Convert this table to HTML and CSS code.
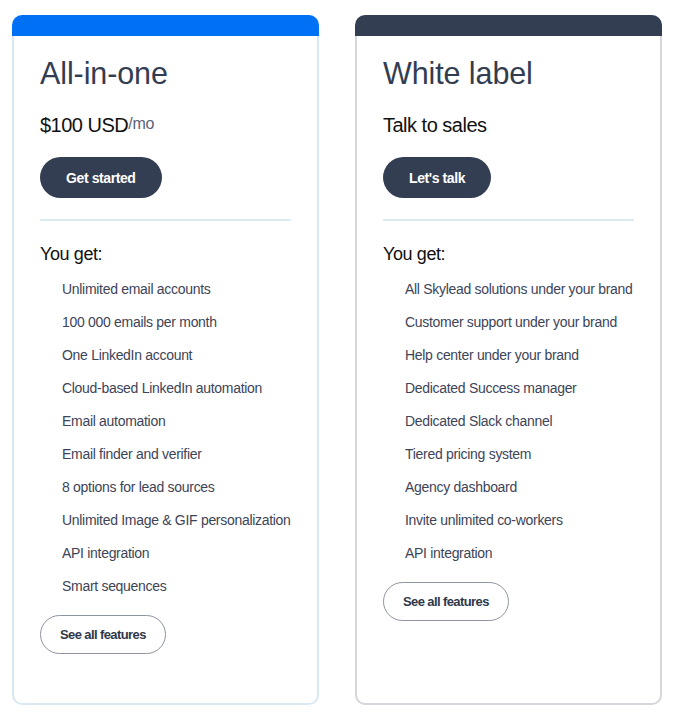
FILE: index.html
```html
<!DOCTYPE html>
<html lang="en">
<head>
<meta charset="utf-8">
<title>Pricing</title>
<link rel="stylesheet" href="styles.css">
</head>
<body>
<div class="plans">
  <div class="card card-blue">
    <div class="card-bar"></div>
    <div class="card-body">
      <h2 class="title">All-in-one</h2>
      <div class="price">$100 USD<span class="per">/mo</span></div>
      <a class="btn-primary">Get started</a>
      <hr class="divider">
      <div class="you-get">You get:</div>
      <ul class="features">
        <li>Unlimited email accounts</li>
        <li>100 000 emails per month</li>
        <li>One LinkedIn account</li>
        <li>Cloud-based LinkedIn automation</li>
        <li>Email automation</li>
        <li>Email finder and verifier</li>
        <li>8 options for lead sources</li>
        <li>Unlimited Image &amp; GIF personalization</li>
        <li>API integration</li>
        <li>Smart sequences</li>
      </ul>
      <a class="btn-outline">See all features</a>
    </div>
  </div>
  <div class="card card-dark">
    <div class="card-bar"></div>
    <div class="card-body">
      <h2 class="title">White label</h2>
      <div class="price">Talk to sales</div>
      <a class="btn-primary">Let's talk</a>
      <hr class="divider">
      <div class="you-get">You get:</div>
      <ul class="features">
        <li>All Skylead solutions under your brand</li>
        <li>Customer support under your brand</li>
        <li>Help center under your brand</li>
        <li>Dedicated Success manager</li>
        <li>Dedicated Slack channel</li>
        <li>Tiered pricing system</li>
        <li>Agency dashboard</li>
        <li>Invite unlimited co-workers</li>
        <li>API integration</li>
      </ul>
      <a class="btn-outline">See all features</a>
    </div>
  </div>
</div>
</body>
</html>
```

FILE: styles.css
```css
* { box-sizing: border-box; }
html, body { margin: 0; padding: 0; background: #fff; }
body {
  font-family: "Liberation Sans", Arial, sans-serif;
  color: #111;
}
.plans {
  display: flex;
  align-items: stretch;
  gap: 36px;
  padding: 15px 0 0 12px;
}
.card {
  width: 307px;
  display: flex;
  flex-direction: column;
}
.card-bar {
  height: 21px;
  border-radius: 10px 10px 0 0;
}
.card-blue .card-bar { background: #0071f5; }
.card-dark .card-bar { background: #343e52; }
.card-body {
  flex: 1;
  border: 2px solid #d9e9f3;
  border-top: none;
  border-radius: 0 0 10px 10px;
  padding: 19px 26px 49px 26px;
  display: flex;
  flex-direction: column;
  align-items: flex-start;
}
.card-dark .card-body { border-color: #d6d7dd; }
.title {
  margin: 0;
  font-size: 30.5px;
  line-height: 36px;
  font-weight: 400;
  color: #333d51;
  letter-spacing: -0.1px;
}
.price {
  margin-top: 22px;
  font-size: 20px;
  line-height: 24px;
  letter-spacing: -0.5px;
  color: #111;
}
.per {
  font-size: 16px;
  line-height: 0;
  color: #5b6275;
  vertical-align: 3.5px;
  letter-spacing: -0.3px;
}
.btn-primary {
  margin-top: 20px;
  height: 41px;
  padding: 0 26px;
  display: inline-flex;
  align-items: center;
  background: #343e52;
  color: #fff;
  border-radius: 21px;
  font-size: 14px;
  font-weight: 700;
  letter-spacing: -0.4px;
}
.divider {
  align-self: stretch;
  margin: 21px 0 0 0;
  border: none;
  height: 2px;
  background: #dbebf4;
}
.you-get {
  margin-top: 21px;
  font-size: 18px;
  line-height: 24px;
  letter-spacing: -0.4px;
  color: #111;
}
.features {
  list-style: none;
  margin: 7px 0 0 0;
  padding: 0 0 0 22px;
}
.features li {
  font-size: 14px;
  line-height: 33px;
  letter-spacing: -0.3px;
  color: #3d4457;
  white-space: nowrap;
}
.btn-outline {
  margin-top: 12px;
  height: 39px;
  padding: 0 19px;
  display: inline-flex;
  align-items: center;
  border: 1px solid #8f94a1;
  border-radius: 20px;
  color: #2f3849;
  font-size: 13px;
  font-weight: 700;
  letter-spacing: -0.6px;
}
```
